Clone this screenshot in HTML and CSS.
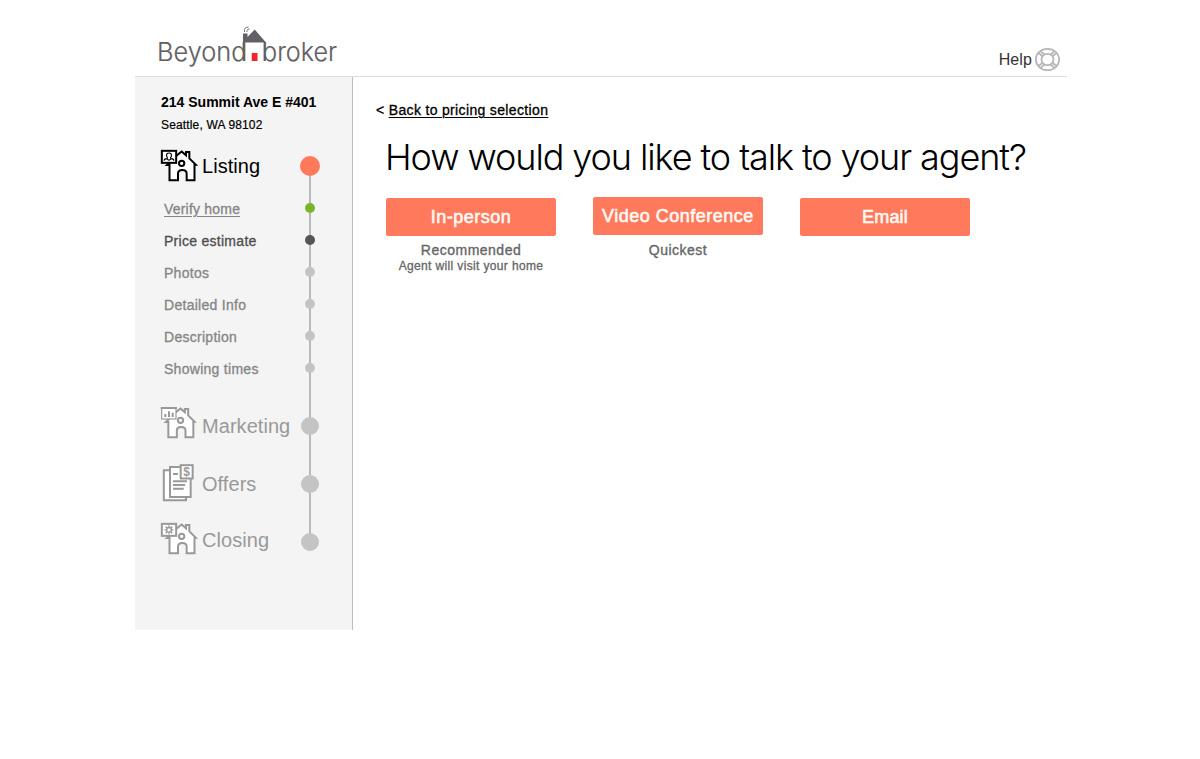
FILE: index.html
```html
<!DOCTYPE html>
<html lang="en">
<head>
<meta charset="utf-8">
<title>Beyond broker</title>
<link rel="stylesheet" href="styles.css">
</head>
<body>
<svg class="defs" width="0" height="0" aria-hidden="true">
  <symbol id="house" viewBox="15 12 114 99">
    <path class="fill" d="M43.500 106V60H36L66 31L80 19.500L93 31V21H103V40L122 59H118.500V106H95V86Q95 75 82 75Q69 75 69 86V106Z"/>
    <circle cx="80" cy="55" r="8"/>
  </symbol>
</svg>
<div class="page">
  <header class="header">
    <svg class="logo" width="184" height="48" viewBox="156 22 184 48" role="img" aria-label="Beyond broker">
      <text class="logo-text" x="157" y="61" textLength="89.500" lengthAdjust="spacingAndGlyphs">Beyond</text>
      <text class="logo-text" x="262" y="61" textLength="75" lengthAdjust="spacingAndGlyphs">broker</text>
      <path class="logo-roof" d="M243 42.500V33.500H247.500V37L254.700 29.500L266 42.500Z"/>
      <path class="logo-line" d="M244.500 42V61M264.500 42V61"/>
      <path class="logo-smoke" d="M244.500 32V29.500Q245 27 248.500 27M247 32V30.500Q247 29 249.500 29"/>
      <rect class="logo-door" x="251.700" y="53" width="5.800" height="8"/>
    </svg>
    <a class="help">Help
      <svg class="help-icon" width="26" height="26" viewBox="0 0 26 26">
        <ellipse cx="13.500" cy="12.500" rx="11.700" ry="10.700"/>
        <ellipse cx="13.500" cy="12.500" rx="6" ry="5.700"/>
        <path d="M4.800 6.300L8.500 9.300M6.800 4.300L10.300 7.500M22.200 6.300L18.500 9.300M20.200 4.300L16.700 7.500M4.800 18.700L8.500 15.700M6.800 20.700L10.300 17.500M22.200 18.700L18.500 15.700M20.200 20.700L16.700 17.500"/>
      </svg>
    </a>
  </header>
  <div class="body">
    <aside class="sidebar">
      <h2 class="address"><span>214 Summit Ave E #401</span></h2>
      <p class="city"><span>Seattle, WA 98102</span></p>
      <ul class="steps">
        <li class="step major listing current">
          <svg class="icon" width="38" height="33" viewBox="15 12 114 99">
            <use href="#house" x="15" y="12" width="114" height="99"/>
            <rect class="fill" x="20.500" y="17.500" width="43" height="36"/>
            <path class="thin" d="M27 47Q28 41 36 41Q39 38 35 34Q33 24 42 24Q51 24 49 34Q45 38 48 41Q56 41 57 47M36 41Q42 50 48 41"/>
          </svg>
          <span class="label">Listing</span><i class="dot"></i>
        </li>
        <li class="step minor done"><span class="label">Verify home</span><i class="dot"></i></li>
        <li class="step minor active"><span class="label">Price estimate</span><i class="dot"></i></li>
        <li class="step minor"><span class="label">Photos</span><i class="dot"></i></li>
        <li class="step minor"><span class="label">Detailed Info</span><i class="dot"></i></li>
        <li class="step minor"><span class="label">Description</span><i class="dot"></i></li>
        <li class="step minor"><span class="label">Showing times</span><i class="dot"></i></li>
        <li class="step major marketing">
          <svg class="icon" width="38" height="33" viewBox="15 12 114 99">
            <use href="#house" x="11.500" y="12" width="114" height="99"/>
            <rect class="fill thin" x="20" y="18" width="43" height="33"/>
            <path d="M17 18H66"/>
            <path d="M31 45V36M42 45V28M53 45V32"/>
          </svg>
          <span class="label">Marketing</span><i class="dot"></i>
        </li>
        <li class="step major offers">
          <svg class="icon" width="38" height="40" viewBox="15 12 114 120">
            <path class="fill" d="M45 34H26.500V124H93V115"/>
            <rect class="fill" x="45" y="24" width="62" height="90"/>
            <path d="M54 45H69M54 67H96M54 78H90M54 89H86"/>
            <rect class="fill" x="77" y="18.500" width="36" height="40"/>
            <text class="dollar" x="95" y="51" text-anchor="middle">$</text>
          </svg>
          <span class="label">Offers</span><i class="dot"></i>
        </li>
        <li class="step major closing">
          <svg class="icon" width="38" height="33" viewBox="15 12 114 99">
            <use href="#house" x="15" y="12" width="114" height="99"/>
            <rect class="fill" x="20.500" y="17.500" width="43" height="36"/>
            <circle class="gear" cx="42" cy="35.500" r="7"/>
            <path class="gear" d="M42 22V28M42 43V49M28 35.500H34M50 35.500H56M32 25.500L37 30.500M47 40.500L52 45.500M52 25.500L47 30.500M37 40.500L32 45.500"/>
          </svg>
          <span class="label">Closing</span><i class="dot"></i>
        </li>
      </ul>
    </aside>
    <main class="main">
      <p class="back">&lt; <a class="back-link">Back to pricing selection</a></p>
      <h1 class="title"><span>How would you like to talk to your agent?</span></h1>
      <div class="options">
        <div class="option in-person">
          <button class="button">In-person</button>
          <p class="note">Recommended</p>
          <p class="subnote">Agent will visit your home</p>
        </div>
        <div class="option video">
          <button class="button">Video Conference</button>
          <p class="note">Quickest</p>
        </div>
        <div class="option email">
          <button class="button">Email</button>
        </div>
      </div>
    </main>
  </div>
</div>
</body>
</html>
```
FILE: styles.css
```css
* { box-sizing: border-box; }
body { margin: 0; background: #fff; color: #000; font-family: "Liberation Sans", Arial, sans-serif; }
h1, h2, p, ul { margin: 0; padding: 0; font-weight: 400; }
ul { list-style: none; }
.defs { display: block; }
.page { width: 932px; margin-left: 135px; }
.header { display: flex; justify-content: space-between; height: 77px; padding: 22px 7px 0 21px; border-bottom: 1px solid #dcdcdc; }
.logo { display: block; }
.logo-text { font: 300 26px Inter, sans-serif; fill: #626065; stroke: #626065; stroke-width: 0.2; }
.logo-roof { fill: #626065; }
.logo-line { stroke: #626065; stroke-width: 1.6; }
.logo-smoke { fill: none; stroke: #77757a; stroke-width: 1; }
.logo-door { fill: #f3242b; }
.help { display: flex; align-items: center; gap: 2px; height: 26px; margin-top: 24px; color: #333; font: 400 16px/26px "Liberation Sans", Arial, sans-serif; letter-spacing: 0.1px; }
.help { padding-top: 1px; }
.help-icon { fill: none; stroke: #b7b7b7; stroke-width: 1.8; }
.body { display: flex; }
.sidebar { width: 218px; height: 553px; padding: 15px 32px 0 26px; background: #f4f4f4; border-right: 1px solid #bdbdbd; }
.address { height: 20px; font-size: 14px; line-height: 20px; font-weight: 700; white-space: nowrap; }
.city { height: 28px; padding-top: 4px; font-size: 12px; line-height: 18px; letter-spacing: 0.15px; -webkit-text-stroke: 0.2px; white-space: nowrap; }
.steps { position: relative; z-index: 0; }
.steps::before { content: ""; position: absolute; z-index: -1; top: 26px; left: 148px; width: 2px; height: 376px; background: #b9b9b9; }
.step { display: flex; align-items: center; width: 159px; color: #858585; }
.major { height: 58px; color: #999; }
.major .label { width: 98px; margin-left: 4px; font-size: 20px; line-height: 24px; letter-spacing: 0.05px; white-space: nowrap; }
.major .dot { width: 18px; height: 18px; margin-left: 1px; }
.icon { flex: none; margin-left: -1px; fill: none; stroke: currentColor; stroke-width: 6; }
.fill { fill: #fff; }
.icon .thin { stroke-width: 3.5; }
.icon .gear { stroke-width: 4; }
.icon .dollar { font: 700 36px "Liberation Sans", Arial, sans-serif; fill: currentColor; stroke: none; }
.dot { flex: none; border-radius: 50%; background: #c4c4c4; }
.listing { height: 52px; color: #000; }
.listing .icon { margin-top: -2px; }
.listing .label { width: 97px; }
.listing .dot { width: 20px; height: 20px; background: #ff7a5c; }
.marketing { margin-top: 13px; }
.marketing .icon { margin-top: -7px; }
.offers .icon { margin-top: -2px; }
.closing .icon { margin-top: -7px; }
.closing .label { margin-top: -4px; }
.minor { height: 32px; padding-left: 3px; font-size: 14px; letter-spacing: 0.28px; -webkit-text-stroke: 0.3px; }
.minor .label { width: 141px; margin-top: 2px; line-height: 18px; }
.minor .dot { width: 10px; height: 10px; }
.done .label { text-decoration: underline; text-underline-offset: 2px; text-decoration-thickness: 1px; letter-spacing: 0.2px; }
.done .label { width: 76px; margin-right: 65px; white-space: nowrap; }
.done .dot { background: #77b52d; }
.active { color: #4d4d4d; }
.active .dot { background: #555; }
.main { padding: 23px 0 0 23px; }
.back { height: 20px; font-size: 14px; line-height: 20px; letter-spacing: 0.36px; word-spacing: -0.1px; -webkit-text-stroke: 0.3px; }
.back-link { text-decoration: underline; text-underline-offset: 2px; text-decoration-thickness: 1px; }
.title { height: 77px; padding: 15px 0 0 9px; font: 300 36px/44px Inter, sans-serif; letter-spacing: -1.09px; white-space: nowrap; }
.options { display: flex; gap: 37px; padding-left: 10px; }
.option { width: 170px; padding-top: 1px; text-align: center; color: #666; }
.button { display: block; width: 170px; height: 38px; padding: 0; border: 0; border-radius: 2px; background: #ff7a5c; color: #fff8f4; font: 400 18px/38px "Liberation Sans", Arial, sans-serif; letter-spacing: 0.5px; -webkit-text-stroke: 0.6px; }
.note { height: 18px; margin-top: 5px; font-size: 14px; line-height: 18px; letter-spacing: 0.5px; -webkit-text-stroke: 0.35px; }
.subnote { font-size: 12px; line-height: 14px; letter-spacing: 0.36px; -webkit-text-stroke: 0.3px; }
.video { padding-top: 0; }
.video .note { margin-top: 6px; }
.email .button { letter-spacing: 0.2px; }
```
